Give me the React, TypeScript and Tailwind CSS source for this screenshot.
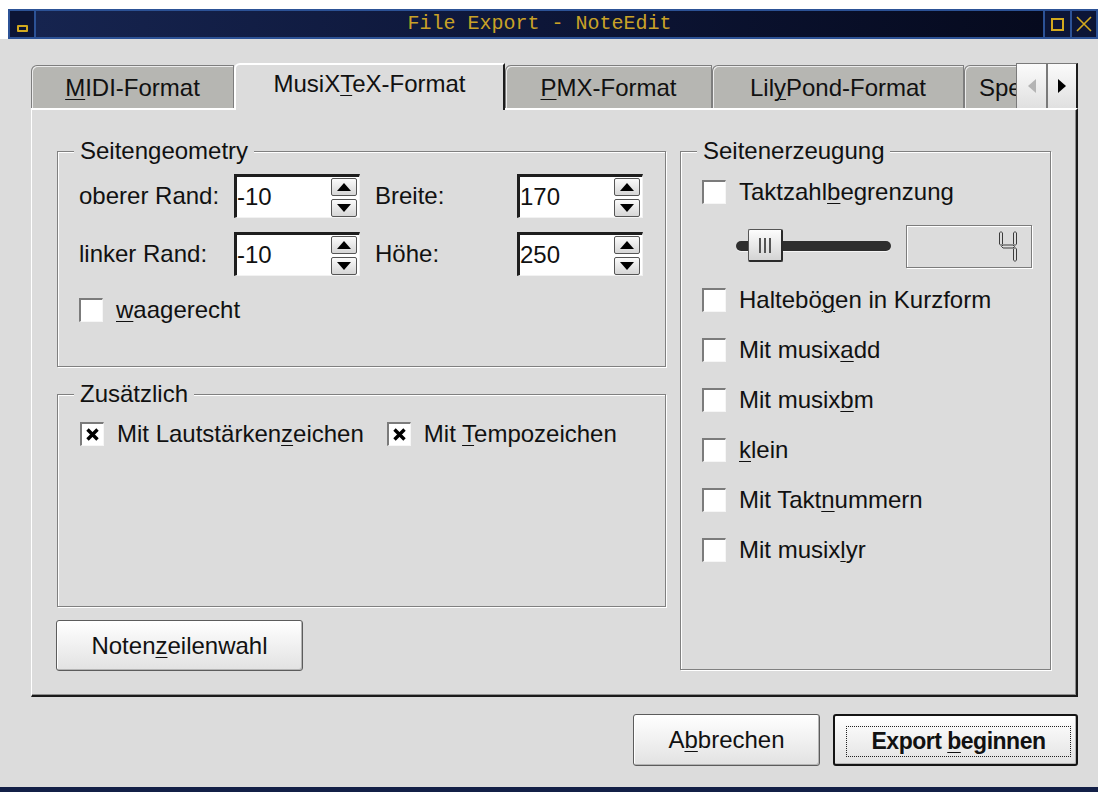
import React from "react";

type Kids = { children?: React.ReactNode; className?: string };

// accelerator letter, drawn underlined
const K: React.FC<Kids> = ({ children }) => (
  <span className="underline decoration-1 underline-offset-[3px]">{children}</span>
);

const TitleBar: React.FC = () => (
  <div className="ml-[8px] h-[30px] shrink-0 flex gap-[2px] p-[2px] bg-[#2c5296]">
    <div className="w-[24px] flex items-end justify-center pb-[5px] bg-[#0c1536]">
      <span className="w-[11px] h-[7px] border-2 border-[#d2a91e] rounded-[1px]" />
    </div>
    <div className="flex-1 flex items-center justify-center bg-linear-to-r from-[#16244f] via-[#0d1638] to-[#060a1e]">
      <span className="font-['Liberation_Mono',monospace] text-[20px] leading-none text-[#c9a227]">
        File Export - NoteEdit
      </span>
    </div>
    <div className="w-[25px] flex items-center justify-center bg-[#0c1536]">
      <span className="w-[13px] h-[13px] border-2 border-[#d2a91e]" />
    </div>
    <div className="w-[24px] flex items-center justify-center bg-[#0c1536]">
      <svg width="16" height="16" viewBox="0 0 16 16">
        <path d="M1 1 L15 15 M15 1 L1 15" stroke="#d2a91e" strokeWidth="1.6" />
      </svg>
    </div>
  </div>
);

const Tab: React.FC<Kids & { active?: boolean }> = ({ active, className = "", children }) =>
  active ? (
    <div
      className={`relative z-10 h-[47px] shrink-0 flex items-center justify-center pb-[8px] bg-[#dcdcdc] border-t-2 border-l-2 border-white border-r-2 border-r-[#1c1c1c] rounded-tl-[6px] ${className}`}
    >
      {children}
    </div>
  ) : (
    <div
      className={`h-[43px] mb-[2px] shrink-0 flex items-center pt-[2px] bg-[#b6b6b2] border-t border-l border-r border-[#7e7e7e] rounded-tl-[6px] shadow-[inset_1px_1px_0_#ececec] ${className}`}
    >
      {children}
    </div>
  );

const ScrollButton: React.FC<{ dir: "left" | "right" }> = ({ dir }) => (
  <div
    className={`w-[31px] h-[47px] shrink-0 flex items-center justify-center bg-linear-to-b from-[#fbfbfb] to-[#e0e0e0] border border-[#7a7a7a] border-b-2 border-b-[#1c1c1c] ${
      dir === "right" ? "border-r-2 border-r-[#1c1c1c]" : ""
    }`}
  >
    {dir === "left" ? (
      <svg width="8" height="14" viewBox="0 0 8 14">
        <path d="M8 0 L0 7 L8 14 Z" fill="#b4b4b4" />
      </svg>
    ) : (
      <svg width="8" height="14" viewBox="0 0 8 14">
        <path d="M0 0 L8 7 L0 14 Z" fill="#000" />
      </svg>
    )}
  </div>
);

const Group: React.FC<Kids & { title: string }> = ({ title, className = "", children }) => (
  <fieldset
    className={`min-w-0 border border-[#808080] shadow-[inset_1px_1px_0_#fff,1px_1px_0_#fff] ${className}`}
  >
    <legend className="ml-[16px] px-[6px] leading-[28px] bg-[#dcdcdc]">{title}</legend>
    {children}
  </fieldset>
);

const CheckBox: React.FC<{ checked?: boolean }> = ({ checked }) => (
  <span className="w-[24px] h-[24px] shrink-0 flex items-center justify-center bg-white border-t-2 border-l-2 border-[#7b7b7b] border-r border-b border-r-[#f6f6f6] border-b-[#f6f6f6]">
    {checked && (
      <svg width="13" height="13" viewBox="0 0 13 13">
        <path d="M1.5 1.5 L11.5 11.5 M11.5 1.5 L1.5 11.5" stroke="#000" strokeWidth="3.4" />
      </svg>
    )}
  </span>
);

const CheckRow: React.FC<Kids & { checked?: boolean }> = ({ checked, className = "", children }) => (
  <div className={`h-[28px] flex items-center gap-[13px] ${className}`}>
    <CheckBox checked={checked} />
    <span className="leading-none">{children}</span>
  </div>
);

const SpinArrow: React.FC<{ up?: boolean }> = ({ up }) => (
  <span className="w-[26px] h-[18px] flex items-center justify-center rounded-[2px] border border-[#555] bg-linear-to-b from-[#fbfbfb] to-[#d6d6d6]">
    <svg width="14" height="8" viewBox="0 0 14 8">
      <path d={up ? "M0 8 L7 0 L14 8 Z" : "M0 0 L7 8 L14 0 Z"} fill="#000" />
    </svg>
  </span>
);

const SpinBox: React.FC<{ value: string }> = ({ value }) => (
  <div className="w-[126px] h-[44px] shrink-0 flex items-center bg-white border-t-[3px] border-l-[3px] border-[#1e1e1e] border-r border-b border-r-[#f2f2f2] border-b-[#f2f2f2]">
    <span className="flex-1 leading-none">{value}</span>
    <div className="flex flex-col gap-[3px] mr-[2px]">
      <SpinArrow up />
      <SpinArrow />
    </div>
  </div>
);

const Slider: React.FC = () => (
  <div className="relative w-[155px] h-[44px] flex items-center">
    <div className="w-full h-[10px] rounded-full bg-[#2e2e2e] shadow-[0_1px_0_#f4f4f4]" />
    <div className="absolute left-[12px] top-[5px] w-[35px] h-[33px] flex items-center justify-center gap-[3px] rounded-[2px] border border-[#555] border-r-2 border-b-2 border-r-[#2a2a2a] border-b-[#2a2a2a] bg-linear-to-b from-[#fdfdfd] to-[#d4d4d4]">
      <span className="w-[2px] h-[15px] bg-[#555]" />
      <span className="w-[2px] h-[15px] bg-[#555]" />
      <span className="w-[2px] h-[15px] bg-[#555]" />
    </div>
  </div>
);

// seven-segment "4", hollow segments
const LcdFour: React.FC = () => (
  <svg width="20" height="33" viewBox="0 0 20 33" fill="none" stroke="#3c3c3c" strokeWidth="1">
    <polygon points="1.5,3 3,1.5 4.5,3 4.5,14 3,15.5 1.5,14" />
    <polygon points="3.5,16.5 5,15 15,15 16.5,16.5 15,18 5,18" />
    <polygon points="15.5,3 17,1.5 18.5,3 18.5,14 17,15.5 15.5,14" />
    <polygon points="15.5,19 17,17.5 18.5,19 18.5,30 17,31.5 15.5,30" />
  </svg>
);

const Lcd: React.FC = () => (
  <div className="ml-[15px] w-[126px] h-[43px] flex items-center justify-end pr-[13px] border border-[#7c7c7c] shadow-[inset_1px_1px_0_#fff,1px_1px_0_#fff]">
    <LcdFour />
  </div>
);

const PushButton: React.FC<Kids> = ({ className = "", children }) => (
  <button
    type="button"
    className={`flex items-center justify-center rounded-[3px] border border-[#5c5c5c] bg-linear-to-b from-white to-[#e2e2e2] shadow-[inset_-1px_-1px_0_#b4b4b4,inset_1px_1px_0_#fff] ${className}`}
  >
    {children}
  </button>
);

export default function App() {
  return (
    <div className="w-[1098px] h-[792px] flex flex-col overflow-hidden bg-white text-[24px] text-[#111] font-['Liberation_Sans',Arial,sans-serif]">
      <div className="h-[9px] shrink-0" />
      <TitleBar />

      <div className="flex-1 flex flex-col bg-[#dcdcdc] pt-[24px]">
        <div className="ml-[31px] w-[1047px] flex flex-col">
          {/* tab strip */}
          <div className="h-[47px] flex">
            <div className="flex-1 flex items-end overflow-hidden">
              <Tab className="w-[203px] justify-center">
                <span>
                  <K>M</K>IDI-Format
                </span>
              </Tab>
              <Tab active className="w-[271px]">
                <span>
                  MusiX<K>T</K>eX-Format
                </span>
              </Tab>
              <Tab className="w-[207px] justify-center">
                <span>
                  <K>P</K>MX-Format
                </span>
              </Tab>
              <Tab className="w-[252px] justify-center">
                <span>
                  Lil<K>y</K>Pond-Format
                </span>
              </Tab>
              <Tab className="w-[140px] pl-[14px] whitespace-nowrap">
                <span>Spezial</span>
              </Tab>
            </div>
            <ScrollButton dir="left" />
            <ScrollButton dir="right" />
          </div>

          {/* page */}
          <div className="-mt-[2px] h-[589px] flex gap-[14px] pt-[27px] pl-[25px] border-t-2 border-l border-white border-r-2 border-b-2 border-r-[#1a1a1a] border-b-[#1a1a1a] shadow-[inset_-1px_-1px_0_#8e8e8e]">
            <div className="w-[609px] flex flex-col">
              <Group title="Seitengeometry" className="h-[230px]">
                <div className="pl-[21px] pt-[9px] flex flex-col">
                  <div className="h-[44px] flex items-center">
                    <span className="w-[155px]">oberer Rand:</span>
                    <SpinBox value="-10" />
                    <span className="ml-[15px] w-[142px]">Breite:</span>
                    <SpinBox value="170" />
                  </div>
                  <div className="mt-[14px] h-[44px] flex items-center">
                    <span className="w-[155px]">linker Rand:</span>
                    <SpinBox value="-10" />
                    <span className="ml-[15px] w-[142px]">Höhe:</span>
                    <SpinBox value="250" />
                  </div>
                  <CheckRow className="mt-[20px]">
                    <K>w</K>aagerecht
                  </CheckRow>
                </div>
              </Group>

              <Group title="Zusätzlich" className="mt-[13px] h-[227px]">
                <div className="pl-[22px] pt-[12px] flex items-center">
                  <CheckRow checked>
                    Mit Lautstärken<K>z</K>eichen
                  </CheckRow>
                  <CheckRow checked className="ml-[23px]">
                    Mit <K>T</K>empozeichen
                  </CheckRow>
                </div>
              </Group>

              <PushButton className="mt-[13px] -ml-[1px] w-[247px] h-[51px]">
                <span>
                  Noten<K>z</K>eilenwahl
                </span>
              </PushButton>
            </div>

            <Group title="Seitenerzeugung" className="w-[371px] h-[533px]">
              <div className="pl-[21px] pt-[13px] flex flex-col">
                <CheckRow>
                  Taktzahl<K>b</K>egrenzung
                </CheckRow>
                <div className="mt-[18px] flex items-center pl-[34px]">
                  <Slider />
                  <Lcd />
                </div>
                <CheckRow className="mt-[18px]">
                  Halteb&ouml;<K>g</K>en in Kurzform
                </CheckRow>
                <CheckRow className="mt-[22px]">
                  Mit musix<K>a</K>dd
                </CheckRow>
                <CheckRow className="mt-[22px]">
                  Mit musix<K>b</K>m
                </CheckRow>
                <CheckRow className="mt-[22px]">
                  <K>k</K>lein
                </CheckRow>
                <CheckRow className="mt-[22px]">
                  Mit Takt<K>n</K>ummern
                </CheckRow>
                <CheckRow className="mt-[22px]">
                  Mit musix<K>l</K>yr
                </CheckRow>
              </div>
            </Group>
          </div>
        </div>

        {/* dialog buttons */}
        <div className="mt-[17px] pr-[20px] flex justify-end gap-[13px]">
          <PushButton className="w-[187px] h-[52px]">
            <span>
              A<K>b</K>brechen
            </span>
          </PushButton>
          <button
            type="button"
            className="w-[245px] h-[52px] flex pt-[10px] pb-[7px] pl-[11px] pr-[5px] rounded-[3px] border-2 border-[#141414] bg-linear-to-b from-white to-[#e2e2e2] shadow-[inset_-1px_-1px_0_#b4b4b4]"
          >
            <span className="flex-1 flex items-center justify-center border border-dotted border-[#222] font-bold text-[23px] tracking-[-0.5px]">
              <span>
                Export <K>b</K>eginnen
              </span>
            </span>
          </button>
        </div>
      </div>

      <div className="h-[5px] shrink-0 bg-[#132047]" />
    </div>
  );
}
